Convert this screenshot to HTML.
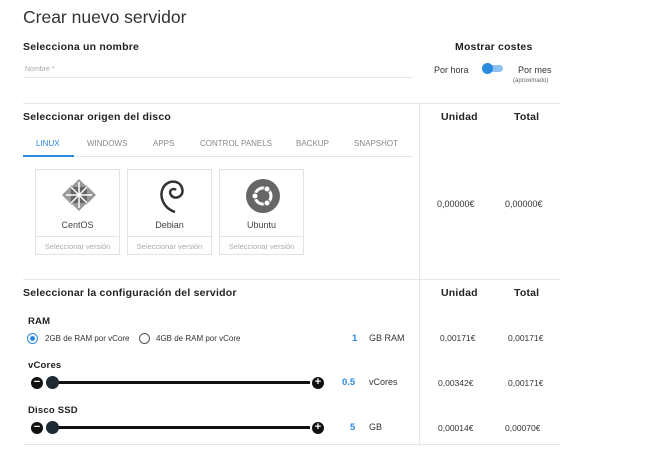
<!DOCTYPE html>
<html><head><meta charset="utf-8"><style>
body{margin:0;width:650px;height:455px;background:#fff;font-family:"Liberation Sans",sans-serif;color:#333;position:relative;overflow:hidden}
.a{position:absolute;white-space:nowrap}
.h{font-weight:bold;font-size:10.5px;letter-spacing:.2px;color:#222}
.hl{position:absolute;height:1px;background:#e6e6e6}
.tab{font-size:8px;color:#888;top:139px}
.card{position:absolute;top:169px;width:85px;height:86px;border:1px solid #e3e3e3;box-sizing:border-box}
.card .n{position:absolute;top:50px;width:100%;text-align:center;font-size:9px;color:#444}
.card .s{position:absolute;top:66px;left:0;right:0;border-top:1px solid #e3e3e3;text-align:center;font-size:7.5px;color:#aaa;padding-top:5px}
.p{font-size:8.5px;color:#333}
.blue{color:#2a8ae0;font-weight:bold;font-size:9.5px}
.track{position:absolute;height:3px;background:#111;left:48px;width:262px}
.btn{position:absolute;width:12px;height:12px;border-radius:50%;background:#111;color:#fff;font-size:11px;line-height:11px;text-align:center;font-weight:bold}
.knob{position:absolute;width:13px;height:13px;border-radius:50%;background:#1e2a33}
</style></head><body>
<div class="a" style="left:23px;top:7px;font-size:17.5px;color:#333">Crear nuevo servidor</div>
<div class="a h" style="left:23px;top:41px">Selecciona un nombre</div>
<div class="a" style="left:25px;top:66px;font-size:7px;color:#aaa">Nombre *</div>
<div class="hl" style="left:23px;top:77px;width:390px"></div>
<div class="a h" style="left:455px;top:41px">Mostrar costes</div>
<div class="a" style="left:434px;top:65px;font-size:9px">Por hora</div>
<div class="a" style="left:484px;top:65px;width:19px;height:7px;border-radius:4px;background:#8fc0f0"></div>
<div class="a" style="left:482px;top:63px;width:11px;height:11px;border-radius:50%;background:#2a8ae0"></div>
<div class="a" style="left:518px;top:65px;font-size:9px">Por mes</div>
<div class="a" style="left:513px;top:78px;font-size:6px;color:#666">(aproximado)</div>
<div class="hl" style="left:23px;top:103px;width:537px"></div>
<div class="a" style="left:419px;top:103px;width:1px;height:342px;background:#e6e6e6"></div>
<div class="a h" style="left:23px;top:111px">Seleccionar origen del disco</div>
<div class="a h" style="left:441px;top:111px">Unidad</div>
<div class="a h" style="left:514px;top:111px">Total</div>
<div class="a tab" style="left:36px;color:#2a8ae0">LINUX</div>
<div class="a tab" style="left:87px">WINDOWS</div>
<div class="a tab" style="left:153px">APPS</div>
<div class="a tab" style="left:200px">CONTROL PANELS</div>
<div class="a tab" style="left:296px">BACKUP</div>
<div class="a tab" style="left:354px">SNAPSHOT</div>
<div class="hl" style="left:23px;top:156px;width:390px"></div>
<div class="a" style="left:23px;top:155px;width:51px;height:2px;background:#2a8ae0"></div>
<div class="card" style="left:35px"><svg class="a" style="left:25px;top:8px" width="36" height="34" viewBox="0 0 36 34"><path d="M18 1L28 11H8Z M18 33L8 23H28Z M1 17L11 7V27Z M35 17L25 27V7Z" fill="#999"/><rect x="10" y="9" width="16" height="16" fill="#666"/><path d="M10 9L26 25M26 9L10 25M18 4V30M5 17H31" stroke="#fff" stroke-width="1.5"/></svg><div class="n">CentOS</div><div class="s">Seleccionar versión</div></div>
<div class="card" style="left:127px"><svg class="a" style="left:27px;top:6px" width="32" height="38" viewBox="0 0 32 38"><path d="M20 36C8 32 4 20 8 12C12 4 24 3 27 12C30 20 20 25 16 19C13 15 18 11 21 14" fill="none" stroke="#333" stroke-width="2.5"/></svg><div class="n">Debian</div><div class="s">Seleccionar versión</div></div>
<div class="card" style="left:219px"><svg class="a" style="left:25px;top:8px" width="36" height="36" viewBox="0 0 36 36"><circle cx="18" cy="18" r="17" fill="#666"/><circle cx="18" cy="18" r="8" fill="none" stroke="#fff" stroke-width="3"/><circle cx="10" cy="18" r="3" fill="#fff" stroke="#666"/><circle cx="22" cy="11" r="3" fill="#fff" stroke="#666"/><circle cx="22" cy="25" r="3" fill="#fff" stroke="#666"/></svg><div class="n">Ubuntu</div><div class="s">Seleccionar versión</div></div>
<div class="a" style="left:437px;top:199px;font-size:9px">0,00000€</div>
<div class="a" style="left:505px;top:199px;font-size:9px">0,00000€</div>
<div class="hl" style="left:23px;top:279px;width:537px"></div>
<div class="a h" style="left:23px;top:287px">Seleccionar la configuración del servidor</div>
<div class="a h" style="left:441px;top:287px">Unidad</div>
<div class="a h" style="left:514px;top:287px">Total</div>
<div class="a h" style="left:28px;top:316px;font-size:9.5px">RAM</div>
<div class="a" style="left:27px;top:333px;width:11px;height:11px;border-radius:50%;border:1px solid #2a8ae0;box-sizing:border-box"></div>
<div class="a" style="left:30px;top:336px;width:5px;height:5px;border-radius:50%;background:#2a8ae0"></div>
<div class="a p" style="left:45px;top:334px;font-size:8px">2GB de RAM por vCore</div>
<div class="a" style="left:139px;top:333px;width:11px;height:11px;border-radius:50%;border:1px solid #555;box-sizing:border-box"></div>
<div class="a p" style="left:156px;top:334px;font-size:8px">4GB de RAM por vCore</div>
<div class="a blue" style="left:352px;top:333px">1</div>
<div class="a p" style="left:369px;top:333px;font-size:9px">GB RAM</div>
<div class="a h" style="left:28px;top:360px;font-size:9.5px">vCores</div>
<div class="track" style="top:381px"></div>
<div class="btn" style="left:31px;top:377px">−</div>
<div class="knob" style="left:46px;top:376px"></div>
<div class="btn" style="left:312px;top:377px">+</div>
<div class="a blue" style="left:342px;top:377px">0.5</div>
<div class="a p" style="left:369px;top:377px;font-size:9px">vCores</div>
<div class="a h" style="left:28px;top:405px;font-size:9.5px">Disco SSD</div>
<div class="track" style="top:426px"></div>
<div class="btn" style="left:31px;top:422px">−</div>
<div class="knob" style="left:46px;top:421px"></div>
<div class="btn" style="left:312px;top:422px">+</div>
<div class="a blue" style="left:350px;top:422px">5</div>
<div class="a p" style="left:369px;top:422px;font-size:9px">GB</div>
<div class="a" style="left:440px;top:333px;font-size:8.5px">0,00171€</div>
<div class="a" style="left:508px;top:333px;font-size:8.5px">0,00171€</div>
<div class="a" style="left:438px;top:378px;font-size:8.5px">0,00342€</div>
<div class="a" style="left:508px;top:378px;font-size:8.5px">0,00171€</div>
<div class="a" style="left:438px;top:423px;font-size:8.5px">0,00014€</div>
<div class="a" style="left:505px;top:423px;font-size:8.5px">0,00070€</div>
<div class="hl" style="left:23px;top:444px;width:537px"></div>
</body></html>
